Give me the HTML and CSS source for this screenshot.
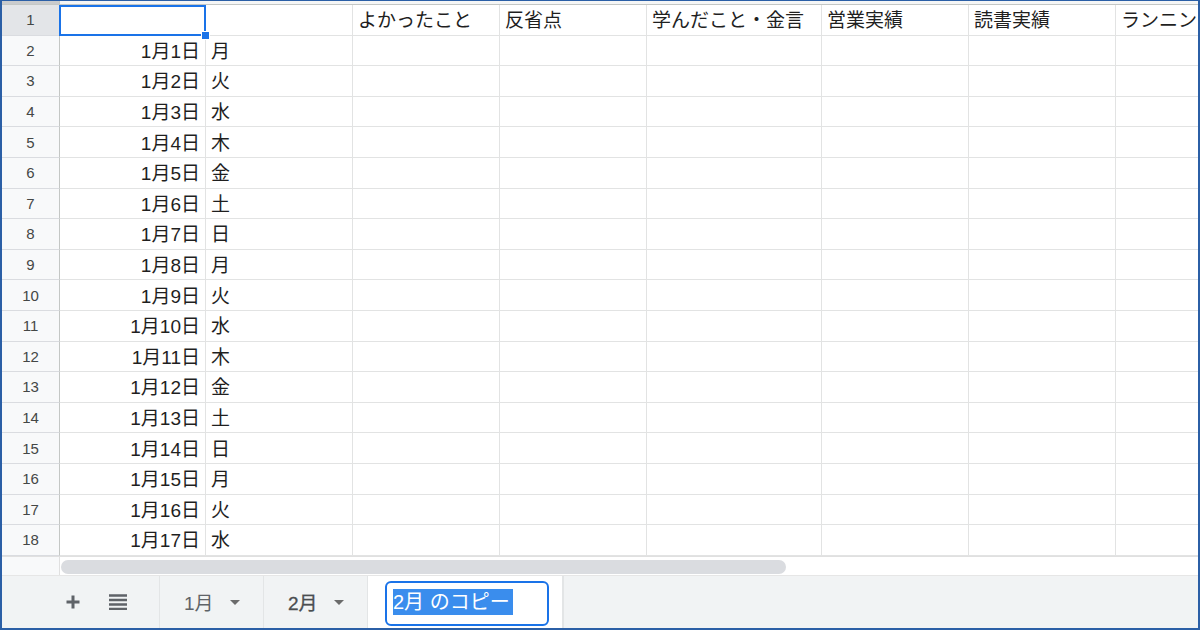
FILE: index.html
```html
<!DOCTYPE html>
<html lang="ja">
<head>
<meta charset="utf-8">
<link rel="stylesheet" href="styles.css">
</head>
<body>
<div class="frame">
  <div class="topband"><div class="tb-head"></div><div class="tb-rest"></div></div>
  <div class="sheet">
    <div class="rh sel">1</div><div class="c a1"><div class="selbox"></div><div class="handle"></div></div><div class="c"></div><div class="c">よかったこと</div><div class="c">反省点</div><div class="c">学んだこと・金言</div><div class="c">営業実績</div><div class="c">読書実績</div><div class="c last">ランニング実績</div>
    <div class="rh">2</div><div class="c r">1月1日</div><div class="c">月</div><div class="c"></div><div class="c"></div><div class="c"></div><div class="c"></div><div class="c"></div><div class="c last"></div>
    <div class="rh">3</div><div class="c r">1月2日</div><div class="c">火</div><div class="c"></div><div class="c"></div><div class="c"></div><div class="c"></div><div class="c"></div><div class="c last"></div>
    <div class="rh">4</div><div class="c r">1月3日</div><div class="c">水</div><div class="c"></div><div class="c"></div><div class="c"></div><div class="c"></div><div class="c"></div><div class="c last"></div>
    <div class="rh">5</div><div class="c r">1月4日</div><div class="c">木</div><div class="c"></div><div class="c"></div><div class="c"></div><div class="c"></div><div class="c"></div><div class="c last"></div>
    <div class="rh">6</div><div class="c r">1月5日</div><div class="c">金</div><div class="c"></div><div class="c"></div><div class="c"></div><div class="c"></div><div class="c"></div><div class="c last"></div>
    <div class="rh">7</div><div class="c r">1月6日</div><div class="c">土</div><div class="c"></div><div class="c"></div><div class="c"></div><div class="c"></div><div class="c"></div><div class="c last"></div>
    <div class="rh">8</div><div class="c r">1月7日</div><div class="c">日</div><div class="c"></div><div class="c"></div><div class="c"></div><div class="c"></div><div class="c"></div><div class="c last"></div>
    <div class="rh">9</div><div class="c r">1月8日</div><div class="c">月</div><div class="c"></div><div class="c"></div><div class="c"></div><div class="c"></div><div class="c"></div><div class="c last"></div>
    <div class="rh">10</div><div class="c r">1月9日</div><div class="c">火</div><div class="c"></div><div class="c"></div><div class="c"></div><div class="c"></div><div class="c"></div><div class="c last"></div>
    <div class="rh">11</div><div class="c r">1月10日</div><div class="c">水</div><div class="c"></div><div class="c"></div><div class="c"></div><div class="c"></div><div class="c"></div><div class="c last"></div>
    <div class="rh">12</div><div class="c r">1月11日</div><div class="c">木</div><div class="c"></div><div class="c"></div><div class="c"></div><div class="c"></div><div class="c"></div><div class="c last"></div>
    <div class="rh">13</div><div class="c r">1月12日</div><div class="c">金</div><div class="c"></div><div class="c"></div><div class="c"></div><div class="c"></div><div class="c"></div><div class="c last"></div>
    <div class="rh">14</div><div class="c r">1月13日</div><div class="c">土</div><div class="c"></div><div class="c"></div><div class="c"></div><div class="c"></div><div class="c"></div><div class="c last"></div>
    <div class="rh">15</div><div class="c r">1月14日</div><div class="c">日</div><div class="c"></div><div class="c"></div><div class="c"></div><div class="c"></div><div class="c"></div><div class="c last"></div>
    <div class="rh">16</div><div class="c r">1月15日</div><div class="c">月</div><div class="c"></div><div class="c"></div><div class="c"></div><div class="c"></div><div class="c"></div><div class="c last"></div>
    <div class="rh">17</div><div class="c r">1月16日</div><div class="c">火</div><div class="c"></div><div class="c"></div><div class="c"></div><div class="c"></div><div class="c"></div><div class="c last"></div>
    <div class="rh">18</div><div class="c r">1月17日</div><div class="c">水</div><div class="c"></div><div class="c"></div><div class="c"></div><div class="c"></div><div class="c"></div><div class="c last"></div>
  </div>
  <div class="scrollrow">
    <div class="sr-head"></div>
    <div class="sr-track"><div class="thumb"></div></div>
  </div>
  <div class="tabbar">
    <div class="tbtn plus">
      <svg width="16" height="16" viewBox="0 0 16 16"><path d="M8 1.5v13M1.5 8h13" stroke="#5f6368" stroke-width="3" fill="none"/></svg>
    </div>
    <div class="tbtn menu">
      <svg width="18" height="16" viewBox="0 0 18 16"><path d="M0 1.5h18M0 6h18M0 10.5h18M0 15h18" stroke="#5f6368" stroke-width="2.4" fill="none"/></svg>
    </div>
    <div class="tab"><span class="tname">1月</span><span class="arrow"></span></div>
    <div class="tab"><span class="tname dark">2月</span><span class="arrow"></span></div>
    <div class="tab active"><div class="editbox"><span class="hl">2月 のコピー</span></div></div>
    <div class="tabfill"></div>
  </div>
</div>
</body>
</html>
```

FILE: styles.css
```css
html, body {
  margin: 0;
  padding: 0;
  background: #ffffff;
}
.frame {
  width: 1200px;
  height: 630px;
  box-sizing: border-box;
  border: 2px solid #2b5fa6;
  border-top-width: 1px;
  display: flex;
  flex-direction: column;
  overflow: hidden;
  font-family: "Liberation Sans", "Noto Sans CJK JP", sans-serif;
  color: #1f1f1f;
}
.topband {
  height: 3px;
  display: flex;
  flex: none;
  border-bottom: 1px solid #c4c7c5;
}
.tb-head {
  width: 57px;
  background: #c9cbcd;
  border-right: 1px solid #c4c7c5;
}
.tb-rest {
  flex: 1;
  background: #f5f6f6;
}
.sheet {
  display: grid;
  grid-template-columns: 58px 146px 147px 147px 147px 175px 147px 147px 1fr;
  grid-auto-rows: 30.6px;
  flex: none;
}
.rh {
  box-sizing: border-box;
  background: #f8f9fa;
  border-right: 1px solid #c4c7c5;
  border-bottom: 1px solid #dadce0;
  display: flex;
  align-items: center;
  justify-content: center;
  font-size: 15px;
  color: #444746;
}
.rh.sel {
  background: #e3e5e8;
}
.c {
  box-sizing: border-box;
  border-right: 1px solid #e2e3e3;
  border-bottom: 1px solid #e2e3e3;
  font-size: 19px;
  line-height: 22px;
  padding: 3px 5px 0 5px;
  display: flex;
  align-items: center;
  white-space: nowrap;
  overflow: hidden;
}
.c.r {
  justify-content: flex-end;
}
.c.last {
  border-right: none;
}
.c.a1 {
  position: relative;
  overflow: visible;
  z-index: 2;
}
.selbox {
  position: absolute;
  left: -1px;
  top: 0;
  right: -1px;
  bottom: -1px;
  border: 2px solid #1a73e8;
  pointer-events: none;
}
.handle {
  position: absolute;
  right: -5px;
  bottom: -5px;
  width: 7px;
  height: 7px;
  background: #1a73e8;
  border: 1px solid #ffffff;
}
.scrollrow {
  height: 18px;
  display: flex;
  flex: none;
  border-top: 1px solid #e0e0e0;
  border-bottom: 1px solid #e6e6e6;
}
.sr-head {
  width: 57px;
  background: #f8f9fa;
  border-right: 1px solid #e0e0e0;
}
.sr-track {
  flex: 1;
  background: #ffffff;
  padding: 3px 0 1px 1px;
}
.thumb {
  width: 725px;
  height: 14px;
  background: #dadce0;
  border-radius: 7px;
}
.tabbar {
  flex: 1;
  background: #f1f3f4;
  display: flex;
  align-items: stretch;
}
.tbtn {
  display: flex;
  align-items: center;
  justify-content: center;
  width: 40px;
}
.tbtn.plus {
  margin-left: 51px;
}
.tbtn.menu {
  margin-left: 5px;
  margin-right: 21px;
}
.tab {
  box-sizing: border-box;
  width: 104px;
  border-left: 1px solid #e3e5e6;
  display: flex;
  align-items: center;
  padding-left: 24px;
  padding-bottom: 1px;
}
.tname {
  font-size: 19px;
  color: #5f6368;
}
.tname.dark {
  color: #4a4d50;
  -webkit-text-stroke: 0.3px #4a4d50;
}
.arrow {
  margin-left: 16px;
  width: 0;
  height: 0;
  border-left: 5px solid transparent;
  border-right: 5px solid transparent;
  border-top: 5px solid #6b6b6b;
  margin-top: 2px;
}
.tab.active {
  width: 197px;
  background: #ffffff;
  padding-left: 17px;
  padding-top: 5px;
  padding-bottom: 2px;
  align-items: stretch;
  border-right: 2px solid #e3e5e6;
}
.editbox {
  box-sizing: border-box;
  width: 164px;
  border: 2px solid #1a73e8;
  border-radius: 6px;
  display: flex;
  align-items: center;
  padding-left: 6px;
  padding-bottom: 3px;
}
.hl {
  background: #3a8ded;
  color: #ffffff;
  font-size: 20px;
  line-height: 26px;
  padding-right: 3px;
}
.tabfill {
  flex: 1;
}
```
